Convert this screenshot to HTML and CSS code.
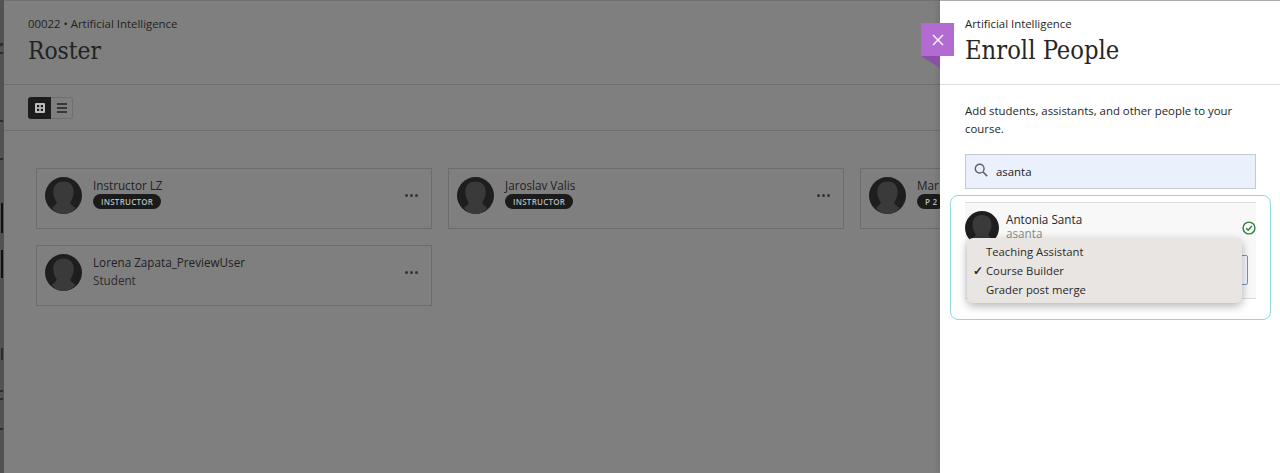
FILE: index.html
```html
<!DOCTYPE html>
<html lang="en">
<head>
    <meta charset="UTF-8">
    <title>Roster - Enroll People</title>
    <link rel="stylesheet" href="styles.css">
</head>
<body>
    <svg class="defs" width="0" height="0">
        <symbol id="avatar" viewBox="0 0 38 38">
            <circle cx="19" cy="19" r="19" fill="#1e1e1e"/>
            <path d="M19 4.5c6.500 0 10.500 4 10.500 10.500 0 4.500-1.500 8.500-3.500 11 0 2 2 3.500 5 5.500-3 4-7 6.500-12 6.500s-9-2.500-12-6.500c3-2 5-3.500 5-5.500-2-2.500-3.500-6.500-3.500-11 0-6.500 4-10.500 10.500-10.500z" fill="#3a3a3a"/>
        </symbol>
    </svg>

    <div class="edge"></div>

    <!-- Roster behind the overlay -->
    <main class="roster">
        <header class="page-head">
            <p class="crumb">00022 • Artificial Intelligence</p>
            <h1>Roster</h1>
        </header>
        <div class="toolbar">
            <div class="view-toggle">
                <span class="view-btn view-btn-on">
                    <svg width="10" height="10" viewBox="0 0 10 10"><rect width="10" height="10" rx="1" fill="#bdbdbd"/><rect x="2" y="2" width="2.2" height="2.2" fill="#1c1c1c"/><rect x="5.8" y="2" width="2.2" height="2.2" fill="#1c1c1c"/><rect x="2" y="5.8" width="2.2" height="2.2" fill="#1c1c1c"/><rect x="5.8" y="5.8" width="2.2" height="2.2" fill="#1c1c1c"/></svg>
                </span>
                <span class="view-btn">
                    <svg width="10" height="10" viewBox="0 0 10 10"><path d="M0 1h10M0 5h10M0 9h10" stroke="#222" stroke-width="1.5"/></svg>
                </span>
            </div>
        </div>
        <div class="cards">
            <div class="card">
                <svg class="avatar"><use href="#avatar"/></svg>
                <div class="card-info">
                    <div class="card-name">Instructor LZ</div>
                    <span class="pill">INSTRUCTOR</span>
                </div>
                <div class="dots"><i></i><i></i><i></i></div>
            </div>
            <div class="card">
                <svg class="avatar"><use href="#avatar"/></svg>
                <div class="card-info">
                    <div class="card-name">Jaroslav Valis</div>
                    <span class="pill">INSTRUCTOR</span>
                </div>
                <div class="dots"><i></i><i></i><i></i></div>
            </div>
            <div class="card">
                <svg class="avatar"><use href="#avatar"/></svg>
                <div class="card-info">
                    <div class="card-name">Mar</div>
                    <span class="pill">P 2</span>
                </div>
            </div>
            <div class="card">
                <svg class="avatar"><use href="#avatar"/></svg>
                <div class="card-info">
                    <div class="card-name">Lorena Zapata_PreviewUser</div>
                    <div class="card-role">Student</div>
                </div>
                <div class="dots"><i></i><i></i><i></i></div>
            </div>
        </div>
    </main>

    <!-- Enroll panel -->
    <aside class="panel">
        <button class="close-tab" type="button" aria-label="Close">
            <svg width="12" height="12" viewBox="0 0 12 12"><path d="M1 1l10 10M11 1L1 11" stroke="#fff" stroke-width="1.4"/></svg>
        </button>
        <span class="close-fold"></span>

        <header class="panel-head">
            <p class="crumb">Artificial Intelligence</p>
            <h2>Enroll People</h2>
        </header>
        <div class="panel-body">
            <p class="intro">Add students, assistants, and other people to your course.</p>
            <div class="search">
                <svg width="14" height="14" viewBox="0 0 16 16" fill="none"><circle cx="6.5" cy="6.5" r="5" stroke="#5c6068" stroke-width="1.6"/><path d="M10.3 10.3L15 15" stroke="#5c6068" stroke-width="1.8"/></svg>
                <span>asanta</span>
            </div>
            <div class="result-ring">
                <div class="result">
                    <div class="person">
                        <svg class="avatar avatar-sm"><use href="#avatar"/></svg>
                        <div class="person-info">
                            <div class="person-name">Antonia Santa</div>
                            <div class="person-user">asanta</div>
                        </div>
                        <svg class="ok" width="14" height="14" viewBox="0 0 14 14" fill="none"><circle cx="7" cy="7" r="5.9" stroke="#2f7d3b" stroke-width="1.4"/><path d="M4.2 7.2l2 2 3.600-4.200" stroke="#2f7d3b" stroke-width="1.4"/></svg>
                    </div>
                    <div class="select-stub"></div>
                </div>
                <ul class="menu">
                    <li>Teaching Assistant</li>
                    <li class="menu-on">Course Builder</li>
                    <li>Grader post merge</li>
                </ul>
            </div>
        </div>
    </aside>
</body>
</html>
```

FILE: styles.css
```css
* {
    box-sizing: border-box;
}

html, body {
    height: 100%;
}

body {
    margin: 0;
    display: flex;
    overflow: hidden;
    font-family: "Open Sans", Arial, sans-serif;
    background-color: #7f7f7f;
    color: #262626;
}

.defs {
    position: absolute;
}

/* edge of the page underneath, only scraps of it show */
.edge {
    width: 4px;
    flex: none;
    background-color: #525252;
    background-repeat: no-repeat;
    background-image:
        linear-gradient(#111, #111), linear-gradient(#111, #111),
        linear-gradient(#2c2c2c, #2c2c2c), linear-gradient(#2c2c2c, #2c2c2c),
        linear-gradient(#2c2c2c, #2c2c2c), linear-gradient(#2c2c2c, #2c2c2c),
        linear-gradient(#2c2c2c, #2c2c2c), linear-gradient(#2c2c2c, #2c2c2c),
        linear-gradient(#2c2c2c, #2c2c2c), linear-gradient(#2c2c2c, #2c2c2c);
    background-size:
        2px 30px, 2px 28px,
        3px 3px, 3px 2px, 3px 2px, 3px 2px,
        2px 12px, 3px 2px, 3px 2px, 3px 2px;
    background-position:
        1px 203px, 1px 250px,
        0 43px, 0 52px, 0 120px, 0 158px,
        1px 348px, 0 390px, 0 398px, 0 428px;
}

p, h1, h2, ul {
    margin: 0;
    padding: 0;
}

.crumb {
    font-size: 11.4px;
    line-height: 16px;
}

h1, h2 {
    font-family: "DejaVu Serif Condensed", "DejaVu Serif", serif;
    font-weight: 400;
    font-size: 24.3px;
    line-height: 32px;
    margin-top: 3px;
}

h2 {
    font-size: 25.3px;
}

/* roster */
.roster {
    flex: none;
    width: 936px;
    overflow: hidden;
    border-top: 1px solid #707070;
    color: #222;
}

.page-head {
    height: 84px;
    padding: 15px 24px 0;
    border-bottom: 1px solid #6e6e6e;
}

.toolbar {
    height: 46px;
    padding: 12px 24px 0;
    border-bottom: 1px solid #6e6e6e;
}

.view-toggle {
    display: flex;
    width: 45px;
    height: 22px;
}

.view-btn {
    flex: 1;
    display: flex;
    align-items: center;
    justify-content: center;
    border: 1px solid #707070;
    border-left: none;
    border-radius: 0 3px 3px 0;
}

.view-btn-on {
    flex: none;
    width: 23px;
    background-color: #1c1c1c;
    border: none;
    border-radius: 3px 0 0 3px;
}

.cards {
    display: grid;
    grid-template-columns: repeat(3, 396px);
    gap: 16px;
    padding: 37px 0 0 32px;
}

.card {
    height: 61px;
    display: flex;
    align-items: flex-start;
    padding: 8px 0 0 8px;
    border: 1px solid #6c6c6c;
}

.avatar {
    width: 37px;
    height: 37px;
    flex: none;
}

.card-info {
    flex: 1;
    margin-left: 11px;
    font-size: 11.7px;
}

.card-name {
    line-height: 16px;
    font-weight: 500;
}

.card-role {
    margin-top: 2px;
    line-height: 16px;
    color: #2d2d2d;
}

.pill {
    display: block;
    width: fit-content;
    height: 15px;
    margin-top: 1px;
    padding: 0 8px;
    border-radius: 8px;
    background-color: #1b1b1b;
    color: #b9b9b9;
    font-size: 8px;
    font-weight: 600;
    line-height: 15px;
    letter-spacing: 0.25px;
}

.dots {
    display: flex;
    gap: 2px;
    margin: 17px 13px 0 0;
}

.dots i {
    width: 3px;
    height: 3px;
    border-radius: 50%;
    background-color: #333;
}

/* panel */
.panel {
    position: relative;
    flex: none;
    width: 340px;
    background-color: #fff;
    border-top: 1px solid #aaa;
    box-shadow: -4px 0 4px rgba(0, 0, 0, 0.07);
}

.close-tab {
    position: absolute;
    top: 22px;
    left: -19px;
    width: 33px;
    height: 33px;
    padding: 0;
    border: none;
    background-color: #b26bd0;
    display: flex;
    align-items: center;
    justify-content: center;
}

.close-fold {
    position: absolute;
    top: 55px;
    left: -19px;
    border-top: 12px solid #8a4fa6;
    border-left: 19px solid transparent;
}

.panel-head {
    height: 84px;
    padding: 15px 25px 0;
    border-bottom: 1px solid #ddd;
}

.panel-body {
    padding: 17px 24px 0 25px;
}

.intro {
    font-size: 11.4px;
    line-height: 18px;
    width: 280px;
}

.search {
    display: flex;
    align-items: center;
    gap: 8px;
    width: 291px;
    height: 35px;
    margin-top: 16px;
    padding-left: 8px;
    background-color: #eaf0fc;
    border: 1px solid #c4c9d4;
    font-size: 11.4px;
    color: #222;
}

.search svg {
    margin-top: -3px;
}

.result-ring {
    position: relative;
    width: 321px;
    height: 125px;
    margin: 6px 0 0 -15px;
    padding: 6px 14px 0 14px;
    border: 1px solid #93d6e2;
    border-radius: 8px;
}

.result {
    height: 97px;
    background-color: #f8f8f8;
    border-top: 1px solid #ddd;
    border-bottom: 1px solid #ddd;
    position: relative;
}

.person {
    display: flex;
    align-items: flex-start;
    padding-top: 8px;
}

.avatar-sm {
    width: 34px;
    height: 34px;
}

.person-info {
    flex: 1;
    margin-left: 7px;
    font-size: 11.7px;
    line-height: 14px;
    padding-top: 1px;
}

.person-name {
    font-weight: 500;
}

.person-user {
    color: #8a8a8a;
}

.ok {
    margin-top: 10px;
}

.select-stub {
    position: absolute;
    top: 52px;
    right: 8px;
    width: 100px;
    height: 30px;
    border: 1px solid #7391d2;
    border-radius: 2px;
    background-color: #f6f8fd;
}

.menu {
    position: absolute;
    top: 42px;
    left: 16px;
    width: 275px;
    height: 65px;
    padding-top: 5px;
    list-style: none;
    background-color: #e9e5e3;
    border-radius: 6px;
    box-shadow: 0 3px 10px rgba(0, 0, 0, 0.3);
    font-size: 11.3px;
    line-height: 18.8px;
    color: #2a2a2a;
}

.menu li {
    position: relative;
    padding-left: 19px;
}

.menu-on::before {
    content: "✓";
    position: absolute;
    left: 6px;
    font-size: 12px;
    font-weight: 700;
}
```
